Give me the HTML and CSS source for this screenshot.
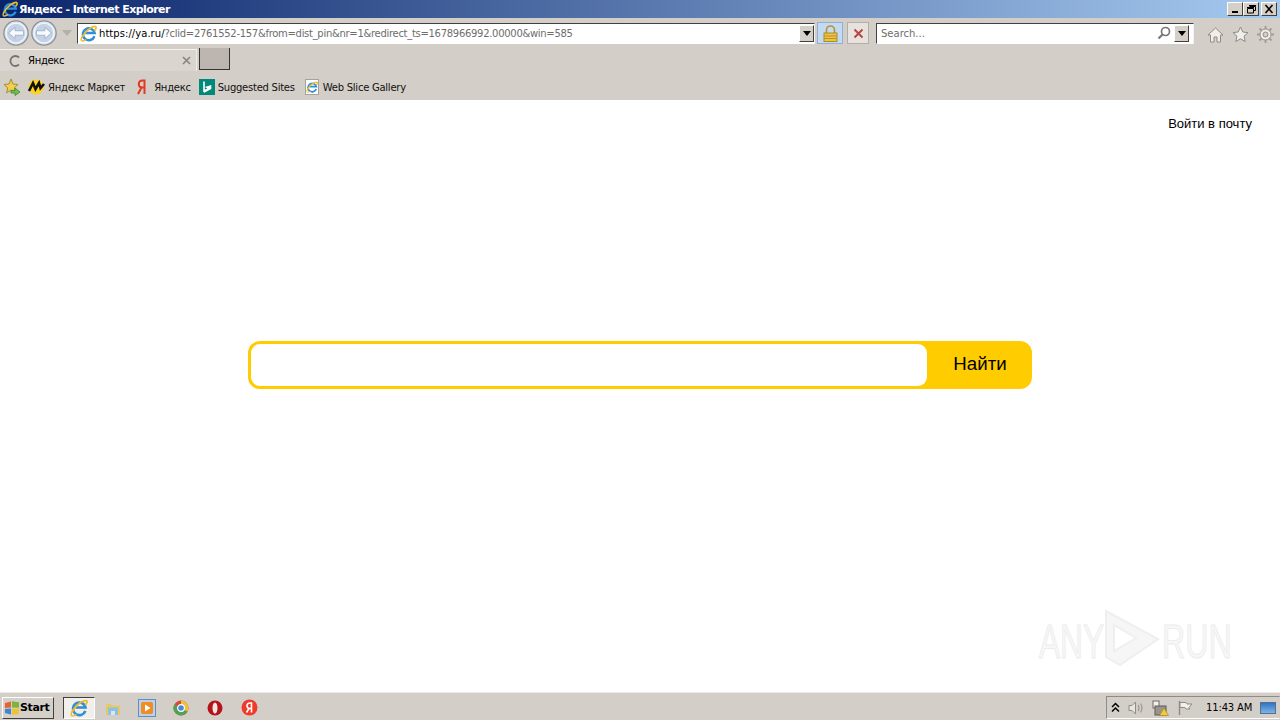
FILE: index.html
```html
<!doctype html>
<html lang="en">
    <head>
        <meta charset="UTF-8" />
        <meta name="viewport" content="width=device-width, initial-scale=1.0" />
        <title>Яндекс - Internet Explorer</title>
        <link rel="stylesheet" href="styles.css">
    </head>
    <body>
        <svg class="defs" width="0" height="0">
            <symbol id="ie" viewBox="0 0 16 16">
                <path d="M13.6 10.6A5.6 5.6 0 1 1 13.8 7.6H5" fill="none" stroke="#2f8fd8" stroke-width="2.3" />
                <path d="M2 11.5C5 5.500 11 1 14.500 1.400 16 2 14.600 4.600 13.500 5.400" fill="none" stroke="#eebb2c" stroke-width="1.600" />
                <path d="M2.600 9.500C.6 13 .6 15.200 2.400 15 3.600 15 5 14.400 6 13.600" fill="none" stroke="#eebb2c" stroke-width="1.300" />
            </symbol>
            <symbol id="arrow" viewBox="0 0 30 30">
                <circle cx="15" cy="15" r="13" fill="#dfe6ee" stroke="#8c9199" stroke-width="1.4" />
                <circle cx="15" cy="15" r="10.5" fill="#c3d2e6" stroke="#f4f6f9" stroke-width="1.2" />
                <path d="M7 15l7-6v3.6h9v4.8h-9V21z" fill="#f7f9fc" stroke="#94a8c4" stroke-width=".8" />
            </symbol>
        </svg>

        <div class="window">
            <!-- Title bar -->
            <header class="titlebar">
                <svg class="title-icon"><use href="#ie" /></svg>
                <span class="title-text">Яндекс - Internet Explorer</span>
                <div class="window-buttons">
                    <button class="win-btn">
                        <svg width="11" height="10"><rect x="2" y="7" width="6" height="2" fill="#000" /></svg>
                    </button>
                    <button class="win-btn">
                        <svg width="11" height="10"><path d="M3.5 2.5h6v4h-2M1.5 4.5h6v4.500h-6z" fill="none" stroke="#000" /><path d="M3 1.500h7M1 3.500h7" stroke="#000" /></svg>
                    </button>
                    <button class="win-btn win-close">
                        <svg width="11" height="10"><path d="M1.500 1l7 8M8.500 1l-7 8" stroke="#000" stroke-width="1.600" /></svg>
                    </button>
                </div>
            </header>

            <!-- Navigation bar -->
            <nav class="navbar">
                <svg class="round-btn"><use href="#arrow" /></svg>
                <svg class="round-btn flip"><use href="#arrow" /></svg>
                <span class="recent-arrow"></span>
                <div class="address">
                    <svg class="address-icon"><use href="#ie" /></svg>
                    <span class="url"><b class="host">https://ya.ru/</b>?clid=2761552-157&amp;from=dist_pin&amp;nr=1&amp;redirect_ts=1678966992.00000&amp;win=585</span>
                    <span class="drop"></span>
                </div>
                <button class="lock-btn">
                    <svg width="15" height="17" viewBox="0 0 15 17">
                        <path d="M3.500 8V5a4 4 0 0 1 8 0v3" fill="none" stroke="#b8932e" stroke-width="1.600" />
                        <rect x="1" y="8" width="13" height="8.500" fill="#f0c53c" stroke="#a98a2d" />
                        <path d="M1 11h13M1 13.500h13" stroke="#b8932e" />
                    </svg>
                </button>
                <button class="stop-btn">
                    <svg width="11" height="11"><path d="M1.500 1.500l8 8M9.500 1.500l-8 8" stroke="#b5483f" stroke-width="2" /></svg>
                </button>
                <div class="search">
                    <span class="search-text">Search...</span>
                    <svg class="lens" width="14" height="14" viewBox="0 0 14 14">
                        <circle cx="8.500" cy="5.500" r="4" fill="none" stroke="#777" stroke-width="1.700" />
                        <path d="M5.500 8.500L1.500 12.500" stroke="#777" stroke-width="2.200" />
                    </svg>
                    <span class="drop"></span>
                </div>
                <div class="tools">
                    <svg width="17" height="17" viewBox="0 0 17 17">
                        <path d="M1 9l7.500-7L16 9h-2.500v7H10v-5H7v5H3.500V9z" fill="#f1efec" stroke="#8f8b85" />
                    </svg>
                    <svg width="17" height="17" viewBox="0 0 17 17">
                        <path d="M8.500 1l2.300 5 5.200.600-3.900 3.500 1.100 5.400-4.700-2.700-4.700 2.700 1.100-5.400L1 6.600 6.200 6z" fill="#f1efec" stroke="#8f8b85" />
                    </svg>
                    <svg width="17" height="17" viewBox="0 0 17 17">
                        <circle cx="8.500" cy="8.500" r="5.500" fill="#f1efec" stroke="#8f8b85" />
                        <circle cx="8.500" cy="8.500" r="2.500" fill="#d4cec8" stroke="#8f8b85" />
                        <path d="M8.500 0v3M8.500 14v3M0 8.500h3M14 8.500h3M2.500 2.500l2 2M12.500 12.500l2 2M14.500 2.500l-2 2M4.500 12.500l-2 2" stroke="#a09c96" stroke-width="1.800" />
                    </svg>
                </div>
            </nav>

            <!-- Tabs -->
            <div class="tabs">
                <div class="tab">
                    <svg width="12" height="12" viewBox="0 0 12 12">
                        <path d="M10 2.500A5 5 0 1 0 10 9.500" fill="none" stroke="#77746f" stroke-width="1.800" />
                    </svg>
                    <span class="tab-title">Яндекс</span>
                    <svg class="tab-close" width="9" height="9"><path d="M1 1l7 7M8 1l-7 7" stroke="#8a8782" stroke-width="1.700" /></svg>
                </div>
                <div class="new-tab"></div>
            </div>

            <!-- Favorites bar -->
            <div class="favorites">
                <svg class="fav-star" width="18" height="18" viewBox="0 0 18 18">
                    <path d="M8 1l2 5 5 .500-3.700 3.300 1 5L8 12l-4.300 2.800 1-5L1 6.500 6 6z" fill="#f0d04e" stroke="#a58f2c" />
                    <path d="M8 12.500h4V10l5 4-5 3.500V15H8z" fill="#6fc04a" stroke="#44842c" stroke-width=".8" />
                </svg>
                <a class="fav fav-market">
                    <svg width="18" height="16" viewBox="0 0 18 16">
                        <circle cx="9" cy="8" r="7.500" fill="#ffd21e" />
                        <path d="M2 12L6 4l2.500 6L12 4l1.500 5L17 5" fill="none" stroke="#111" stroke-width="2.600" />
                    </svg>
                    Яндекс Маркет
                </a>
                <a class="fav fav-ya">
                    <svg width="10" height="16" viewBox="0 0 10 16">
                        <path d="M7.500 15V1.500H5.500C3 1.500 1.800 3 1.800 5S3 8.500 5.500 8.500H7.500M4.500 8.500L1 15" fill="none" stroke="#e03a20" stroke-width="2" />
                    </svg>
                    Яндекс
                </a>
                <a class="fav fav-bing">
                    <span class="bing-icon">
                        <svg width="16" height="16" viewBox="0 0 16 16">
                            <path d="M5 2.500v9.500l5-2.500L7.800 8.200 11.500 7v2.500L5 13" fill="#fff" stroke="#fff" stroke-width="1.600" />
                        </svg>
                    </span>
                    Suggested Sites
                </a>
                <a class="fav fav-web">
                    <span class="page-icon"><svg width="12" height="12"><use href="#ie" /></svg></span>
                    Web Slice Gallery
                </a>
            </div>

            <!-- Page -->
            <main class="page">
                <div class="page-top">
                    <a class="mail-link">Войти в почту</a>
                </div>
                <form class="search-form">
                    <input class="search-input" type="text" />
                    <button class="search-submit" type="button">Найти</button>
                </form>
                <svg class="watermark" width="204" height="66" viewBox="0 0 204 66">
                    <text class="wm-text" transform="translate(1 53) scale(.66 1)">ANY</text>
                    <path d="M68 6l52 28-38 26-14-8V14zM76 20v26l22-13z" fill="#f6f6f6" stroke="#efefef" stroke-width="2" />
                    <text class="wm-text" transform="translate(124 53) scale(.67 1)">RUN</text>
                </svg>
            </main>

            <!-- Taskbar -->
            <footer class="taskbar">
                <button class="start">
                    <svg width="16" height="16" viewBox="0 0 16 16">
                        <path d="M1 3l6-1.500v6l-6 .500z" fill="#e2662e" />
                        <path d="M8 1.200l7 1v5.500l-7-.200z" fill="#7cb342" />
                        <path d="M1 9l6-.500v6L1 13z" fill="#3f86d0" />
                        <path d="M8 8.500l7 .200V14l-7 1z" fill="#f0c336" />
                    </svg>
                    Start
                </button>
                <div class="task-apps">
                    <span class="task-active"><svg width="18" height="18"><use href="#ie" /></svg></span>
                    <span class="task-app">
                        <svg width="16" height="16" viewBox="0 0 16 16">
                            <path d="M1 4h5l1 1.500h8V15H1z" fill="#e6c86a" />
                            <path d="M3 7.500h10V15H3z" fill="#8fc1dc" />
                            <path d="M6 15v-4h4v4z" fill="#d8e7ef" />
                        </svg>
                    </span>
                    <span class="task-app">
                        <svg width="18" height="18" viewBox="0 0 18 18">
                            <rect x=".5" y=".5" width="17" height="17" fill="#bcd0e6" stroke="#5f8fc2" />
                            <rect x="3" y="3" width="12" height="12" rx="2" fill="#ef8c22" />
                            <path d="M7 5.500v7l5.500-3.500z" fill="#fff" />
                        </svg>
                    </span>
                    <span class="task-app">
                        <svg width="16" height="16" viewBox="0 0 16 16">
                            <circle cx="8" cy="8" r="7.500" fill="#d9483b" />
                            <path d="M8 8L14.500 11.500A7.500 7.500 0 0 1 3 13.600z" fill="#4aa654" />
                            <path d="M8 8L3 13.600A7.500 7.500 0 0 1 1.400 4.400z" fill="#4aa654" />
                            <path d="M8 .5A7.500 7.500 0 0 1 14.500 11.500L8 8z" fill="#f0c336" />
                            <circle cx="8" cy="8" r="3.400" fill="#4b86d8" stroke="#fff" stroke-width="1.200" />
                        </svg>
                    </span>
                    <span class="task-app">
                        <svg width="16" height="16" viewBox="0 0 16 16">
                            <circle cx="8" cy="8" r="7.500" fill="#b5121b" />
                            <ellipse cx="8" cy="8" rx="2.500" ry="5.500" fill="#f4e6e0" />
                        </svg>
                    </span>
                    <span class="task-app">
                        <svg width="17" height="17" viewBox="0 0 17 17">
                            <circle cx="8.500" cy="8.500" r="8" fill="#f0392b" />
                            <path d="M10.500 13.500V4H9C7 4 6 5.200 6 6.800S7 9.500 9 9.500h1.500M8 9.500l-2.500 4" fill="none" stroke="#fff" stroke-width="1.600" />
                        </svg>
                    </span>
                </div>
                <div class="tray">
                    <svg width="9" height="11" viewBox="0 0 9 11">
                        <path d="M1 5l3.500-3.500L8 5M1 9.500L4.500 6 8 9.500" fill="none" stroke="#000" stroke-width="1.500" />
                    </svg>
                    <svg width="16" height="16" viewBox="0 0 16 16">
                        <path d="M1 5.500h3L7.500 2v12L4 10.500H1z" fill="#e8e6e2" stroke="#8f8b85" />
                        <path d="M10 5q2 3 0 6M12.500 3.500q3 4.500 0 9" fill="none" stroke="#9a9690" stroke-width="1.200" />
                    </svg>
                    <svg width="17" height="16" viewBox="0 0 17 16">
                        <rect x="1" y="1" width="6" height="7" fill="#f2f0ec" stroke="#6e6a64" />
                        <rect x="3" y="6" width="11" height="9" fill="#9a958c" stroke="#5e5a54" />
                        <path d="M12 8l4.500 7.500h-9z" fill="#f3cc3a" stroke="#9c8224" stroke-width=".6" />
                    </svg>
                    <svg width="16" height="16" viewBox="0 0 16 16">
                        <path d="M2.500 1v14" stroke="#8f8b85" stroke-width="1.400" />
                        <path d="M3 2.500h6l1 1.500h5l-3 3.500 1 1.500H9L8 7.500H3z" fill="#f2f0ec" stroke="#8f8b85" />
                    </svg>
                    <span class="clock">11:43 AM</span>
                    <span class="desktop-btn"></span>
                </div>
            </footer>
        </div>
    </body>
</html>
```

FILE: styles.css
```css
* {
    box-sizing: border-box;
}
body {
    margin: 0;
    padding: 0;
    font-family: "DejaVu Sans", sans-serif;
    background: #fff;
    overflow: hidden;
}
button {
    padding: 0;
    font-family: inherit;
}
.defs {
    display: block;
    height: 0;
}
.window {
    width: 1280px;
    height: 720px;
    display: flex;
    flex-direction: column;
}

/* title bar */
.titlebar {
    height: 18px;
    flex: none;
    display: flex;
    align-items: center;
    padding: 0 3px 0 2px;
    background: linear-gradient(to right, #0a246a, #a6caf0);
    color: #fff;
}
.title-icon {
    width: 16px;
    height: 16px;
    margin-right: 1px;
}
.title-text {
    font-size: 11px;
    font-weight: bold;
    letter-spacing: -0.55px;
}
.window-buttons {
    margin-left: auto;
    display: flex;
}
.win-btn {
    width: 16px;
    height: 14px;
    display: flex;
    align-items: center;
    justify-content: center;
    background: #d4d0c8;
    border: 1px solid;
    border-color: #fff #404040 #404040 #fff;
}
.win-close {
    margin-left: 2px;
}

/* nav bar */
.navbar {
    height: 28px;
    flex: none;
    display: flex;
    align-items: center;
    padding: 2px 0 0 2px;
    background: #d4cec8;
}
.round-btn {
    width: 28px;
    height: 28px;
    flex: none;
}
.flip {
    transform: scaleX(-1);
}
.recent-arrow {
    width: 0;
    height: 0;
    margin: 0 5px 0 4px;
    border: 5px solid transparent;
    border-top: 6px solid #b4b0aa;
    border-bottom: 0;
}
.address,
.search {
    height: 21px;
    flex: none;
    display: flex;
    align-items: center;
    background: #fff;
    border: 1px solid;
    border-color: #404040 #f4f2ef #fff #404040;
}
.address {
    width: 738px;
    padding-left: 2px;
}
.address-icon {
    width: 17px;
    height: 17px;
    margin-right: 2px;
}
.url {
    font-size: 10px;
    letter-spacing: -0.295px;
    color: #6d6d6d;
    white-space: nowrap;
}
.host {
    font-weight: normal;
    letter-spacing: 0.05px;
    color: #000;
}
.drop {
    width: 15px;
    height: 17px;
    margin-left: auto;
    flex: none;
    display: flex;
    align-items: center;
    justify-content: center;
    background: #d4d0c8;
    border: 1px solid;
    border-color: #fff #404040 #404040 #fff;
}
.drop::after {
    content: "";
    border: 4px solid transparent;
    border-top: 5px solid #000;
    border-bottom: 0;
}
.lock-btn {
    width: 26px;
    height: 22px;
    flex: none;
    margin-left: 2px;
    display: flex;
    align-items: center;
    justify-content: center;
    background: #c4daf2;
    border: 1px solid #8fb1d8;
}
.stop-btn {
    width: 22px;
    height: 22px;
    flex: none;
    margin-left: 4px;
    display: flex;
    align-items: center;
    justify-content: center;
    background: #e8e2de;
    border: 1px solid #b3aeaa;
}
.search {
    width: 318px;
    margin-left: 7px;
    padding-left: 4px;
}
.search-text {
    font-size: 10px;
    color: #6d6d6d;
}
.lens {
    margin: 0 3px 0 auto;
}
.search .drop {
    margin-left: 0;
    margin-right: 4px;
}
.tools {
    display: flex;
    gap: 8px;
    margin-left: 13px;
    padding-top: 3px;
}

/* tabs */
.tabs {
    height: 26px;
    flex: none;
    display: flex;
    padding-top: 2px;
    background: #d4cec8;
}
.tab {
    width: 197px;
    height: 22px;
    margin-top: 1px;
    display: flex;
    align-items: center;
    padding: 0 5px 0 9px;
    background: #dad5cf;
    border-top: 1px solid #f5f3f0;
    border-right: 1px solid #efece8;
}
.tab-title {
    margin-left: 7px;
    font-size: 10px;
    letter-spacing: -0.3px;
}
.tab-close {
    margin-left: auto;
}
.new-tab {
    width: 31px;
    height: 22px;
    margin-left: 2px;
    background: #bdb5b0;
    border: 1px solid;
    border-color: #e8e4e0 #333 #333 #333;
    border-top: 0;
}

/* favorites */
.favorites {
    height: 28px;
    flex: none;
    display: flex;
    align-items: center;
    padding: 2px 0 0 3px;
    background: #d4cec8;
    font-size: 10px;
    letter-spacing: -0.25px;
}
.fav-star {
    margin-right: 6px;
}
.fav {
    display: flex;
    align-items: center;
    gap: 3px;
    margin-right: 9px;
    white-space: nowrap;
    color: #111;
}
.fav-market {
    margin-right: 12px;
}
.fav-ya {
    gap: 7px;
    margin-right: 8px;
}
.fav-bing {
    margin-right: 10px;
}
.fav-web {
    gap: 4px;
}
.bing-icon {
    width: 16px;
    height: 16px;
    display: flex;
    background: #00897b;
}
.page-icon {
    width: 14px;
    height: 16px;
    display: flex;
    align-items: center;
    justify-content: center;
    background: #fff;
    border: 1px solid #a5a19b;
}

/* page */
.page {
    flex: 1;
    position: relative;
    background: #fff;
    font-family: "Liberation Sans", Arial, sans-serif;
}
.page-top {
    display: flex;
    justify-content: flex-end;
    padding: 16px 28px 0 0;
}
.mail-link {
    font-size: 13px;
    line-height: 16px;
    color: #000;
}
.search-form {
    width: 784px;
    height: 48px;
    margin: 209px auto 0;
    display: flex;
    background: #fc0;
    border-radius: 12px;
    padding: 3px;
}
.search-input {
    flex: 1;
    min-width: 0;
    border: 0;
    border-radius: 9px;
    background: #fff;
    outline: none;
}
.search-submit {
    width: 102px;
    flex: none;
    border: 0;
    background: transparent;
    font-size: 18.7px;
    color: #000;
    padding: 0 0 2px 4px;
}
.watermark {
    position: absolute;
    left: 1038px;
    top: 505px;
}
.wm-text {
    font-family: "Liberation Sans", Arial, sans-serif;
    font-size: 48px;
    fill: #f7f7f7;
    stroke: #ececec;
    stroke-width: 1;
}

/* taskbar */
.taskbar {
    height: 28px;
    flex: none;
    display: flex;
    align-items: center;
    padding: 2px 0 0 2px;
    background: #d4cec8;
    border-top: 1px solid #ebe8e4;
    box-shadow: 0 -1px 0 #c8c4bc;
}
.start {
    width: 52px;
    height: 22px;
    display: flex;
    align-items: center;
    gap: 0;
    padding-left: 1px;
    background: #d4d0c8;
    border: 1px solid;
    border-color: #fff #404040 #404040 #fff;
    font-size: 11px;
    font-weight: bold;
    letter-spacing: -0.4px;
    color: #000;
}
.task-apps {
    display: flex;
    align-items: center;
    margin-left: 9px;
}
.task-active {
    width: 32px;
    height: 22px;
    display: flex;
    align-items: center;
    justify-content: center;
    background: #f1efec;
    border: 1px solid;
    border-color: #404040 #fff #fff #404040;
}
.task-app {
    width: 34px;
    display: flex;
    justify-content: center;
}
.task-active + .task-app {
    margin-left: 1px;
}
.tray {
    width: 174px;
    height: 23px;
    margin-left: auto;
    display: flex;
    align-items: center;
    gap: 8px;
    padding-left: 4px;
    border: 1px solid;
    border-color: #8f8b85 #d4cec8 #fff #8f8b85;
}
.clock {
    margin-left: 5px;
    font-size: 10px;
    letter-spacing: -0.15px;
    white-space: nowrap;
}
.desktop-btn {
    width: 16px;
    height: 12px;
    background: linear-gradient(to bottom, #2f74c4, #7db4e4);
    border: 1px solid #55708f;
}
```
